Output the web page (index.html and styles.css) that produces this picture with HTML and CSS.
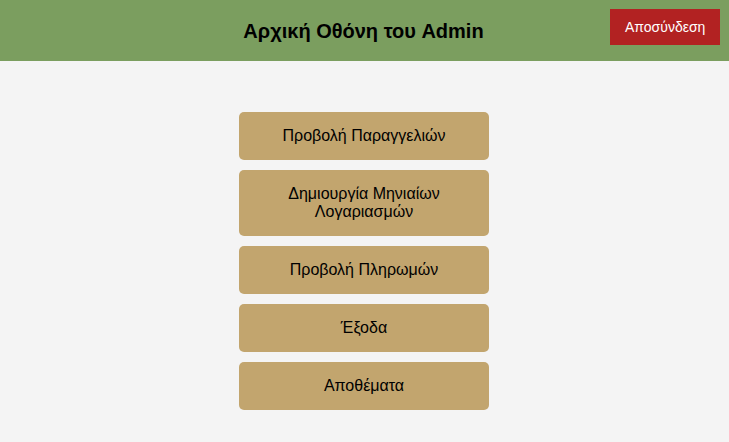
FILE: index.html
```html
<!DOCTYPE html>
<html lang="el">
<head>
<meta charset="utf-8">
<title>Admin</title>
<link rel="stylesheet" href="styles.css">
</head>
<body>
<header class="topbar">
  <div class="spacer"></div>
  <h1 class="title">Αρχική Οθόνη του Admin</h1>
  <button class="logout">Αποσύνδεση</button>
</header>
<main class="menu">
  <button class="menu-btn">Προβολή Παραγγελιών</button>
  <button class="menu-btn">Δημιουργία Μηνιαίων<br>Λογαριασμών</button>
  <button class="menu-btn">Προβολή Πληρωμών</button>
  <button class="menu-btn">Έξοδα</button>
  <button class="menu-btn">Αποθέματα</button>
</main>
</body>
</html>
```
FILE: styles.css
```css
html, body {
  margin: 0;
  padding: 0;
}
body {
  background: #f4f4f4;
  font-family: "Liberation Sans", Arial, sans-serif;
  color: #000;
}
.topbar {
  height: 61px;
  background: #7b9e5f;
  display: grid;
  grid-template-columns: 1fr auto 1fr;
  align-items: center;
  box-sizing: border-box;
  padding: 0 9px;
}
.title {
  margin: 0;
  font-size: 20px;
  font-weight: bold;
  line-height: 24px;
  padding-right: 2px;
}
.logout {
  justify-self: end;
  align-self: start;
  margin-top: 9px;
  background: #b22222;
  color: #fff;
  border: none;
  font-family: "Liberation Sans", Arial, sans-serif;
  font-size: 14px;
  line-height: 16px;
  padding: 10px 15px;
  width: 110px;
  height: 36px;
}
.menu {
  display: flex;
  flex-direction: column;
  align-items: center;
  gap: 10px;
  padding-top: 51px;
  padding-right: 1px;
}
.menu-btn {
  width: 250px;
  background: #c2a56e;
  border: none;
  border-radius: 5px;
  font-family: "Liberation Sans", Arial, sans-serif;
  font-size: 16px;
  line-height: 18px;
  padding: 15px 10px;
  color: #000;
}
```
